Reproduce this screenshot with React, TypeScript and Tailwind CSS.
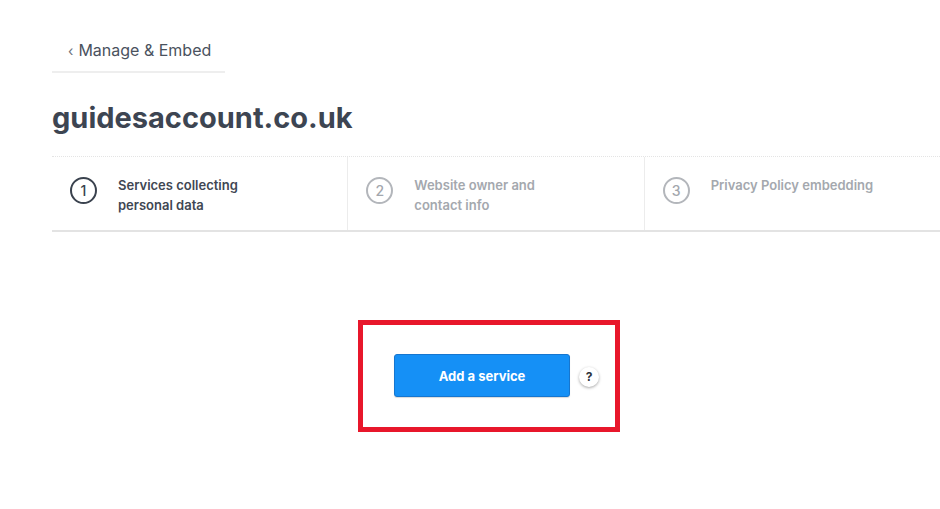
import React from "react";

const steps = [
  { n: 1, label: ["Services collecting", "personal data"], active: true },
  { n: 2, label: ["Website owner and", "contact info"], active: false },
  { n: 3, label: ["Privacy Policy embedding"], active: false },
];

function Step({ n, label, active, first }: { n: number; label: string[]; active: boolean; first: boolean }) {
  return (
    <div
      className={`flex-1 flex items-start pt-[20px] pl-[18px] ${first ? "" : "border-l border-[#ececec]"}`}
    >
      <div
        className={`w-[27px] h-[27px] shrink-0 rounded-full border-2 flex items-center justify-center text-[14px] font-medium ${
          active ? "border-[#3a424e] text-[#3a424e]" : "border-[#b3b6bb] text-[#a3a7ad]"
        }`}
      >
        {n}
      </div>
      <div
        className={`ml-[21px] -mt-[2px] text-[13px] leading-[20px] font-semibold ${
          active ? "text-[#3f4753]" : "text-[#a4a8ae]"
        }`}
      >
        {label.map((l) => (
          <div key={l}>{l}</div>
        ))}
      </div>
    </div>
  );
}

export default function App() {
  return (
    <div className="w-[940px] h-[509px] bg-white overflow-hidden font-['Inter','Liberation_Sans',sans-serif]">
      <div className="pl-[52px] pt-[39px]">
        {/* breadcrumb */}
        <div className="w-[173px] border-b-2 border-[#eeeeee] pl-[16px] pb-[9px] text-[16px] leading-[22px] text-[#4a525e]">
          <span className="text-[14px] mr-[5px] text-[#6a717b]">‹</span>Manage &amp; Embed
        </div>

        <h1 className="mt-[27px] text-[29px] leading-[36px] font-bold text-[#3d4552]">guidesaccount.co.uk</h1>

        {/* steps */}
        <div className="mt-[20px] h-[74px] flex border-t border-dotted border-t-[#e4e4e4]">
          {steps.map((s, i) => (
            <Step key={s.n} n={s.n} label={s.label} active={s.active} first={i === 0} />
          ))}
        </div>
        <div className="h-[2px] bg-[#e3e3e3]" />

        {/* action */}
        <div className="mt-[88px] ml-[306px] w-[262px] h-[112px] border-[5px] border-[#e8172b] pl-[31px] pt-[29px]">
          <div className="flex items-center">
            <button className="w-[176px] h-[43px] pt-[3px] rounded-[3px] bg-[#1590f6] border border-[#1676cf] text-white text-[13px] font-bold shadow-[0_1px_1px_rgba(0,0,0,0.15)]">
              Add a service
            </button>
            <div className="ml-[9px] mt-[3px] w-[20px] h-[20px] rounded-full bg-white shadow-[0_1px_3px_rgba(0,0,0,0.35)] flex items-center justify-center text-[12px] font-bold text-[#2c323b]">
              ?
            </div>
          </div>
        </div>
      </div>
    </div>
  );
}
